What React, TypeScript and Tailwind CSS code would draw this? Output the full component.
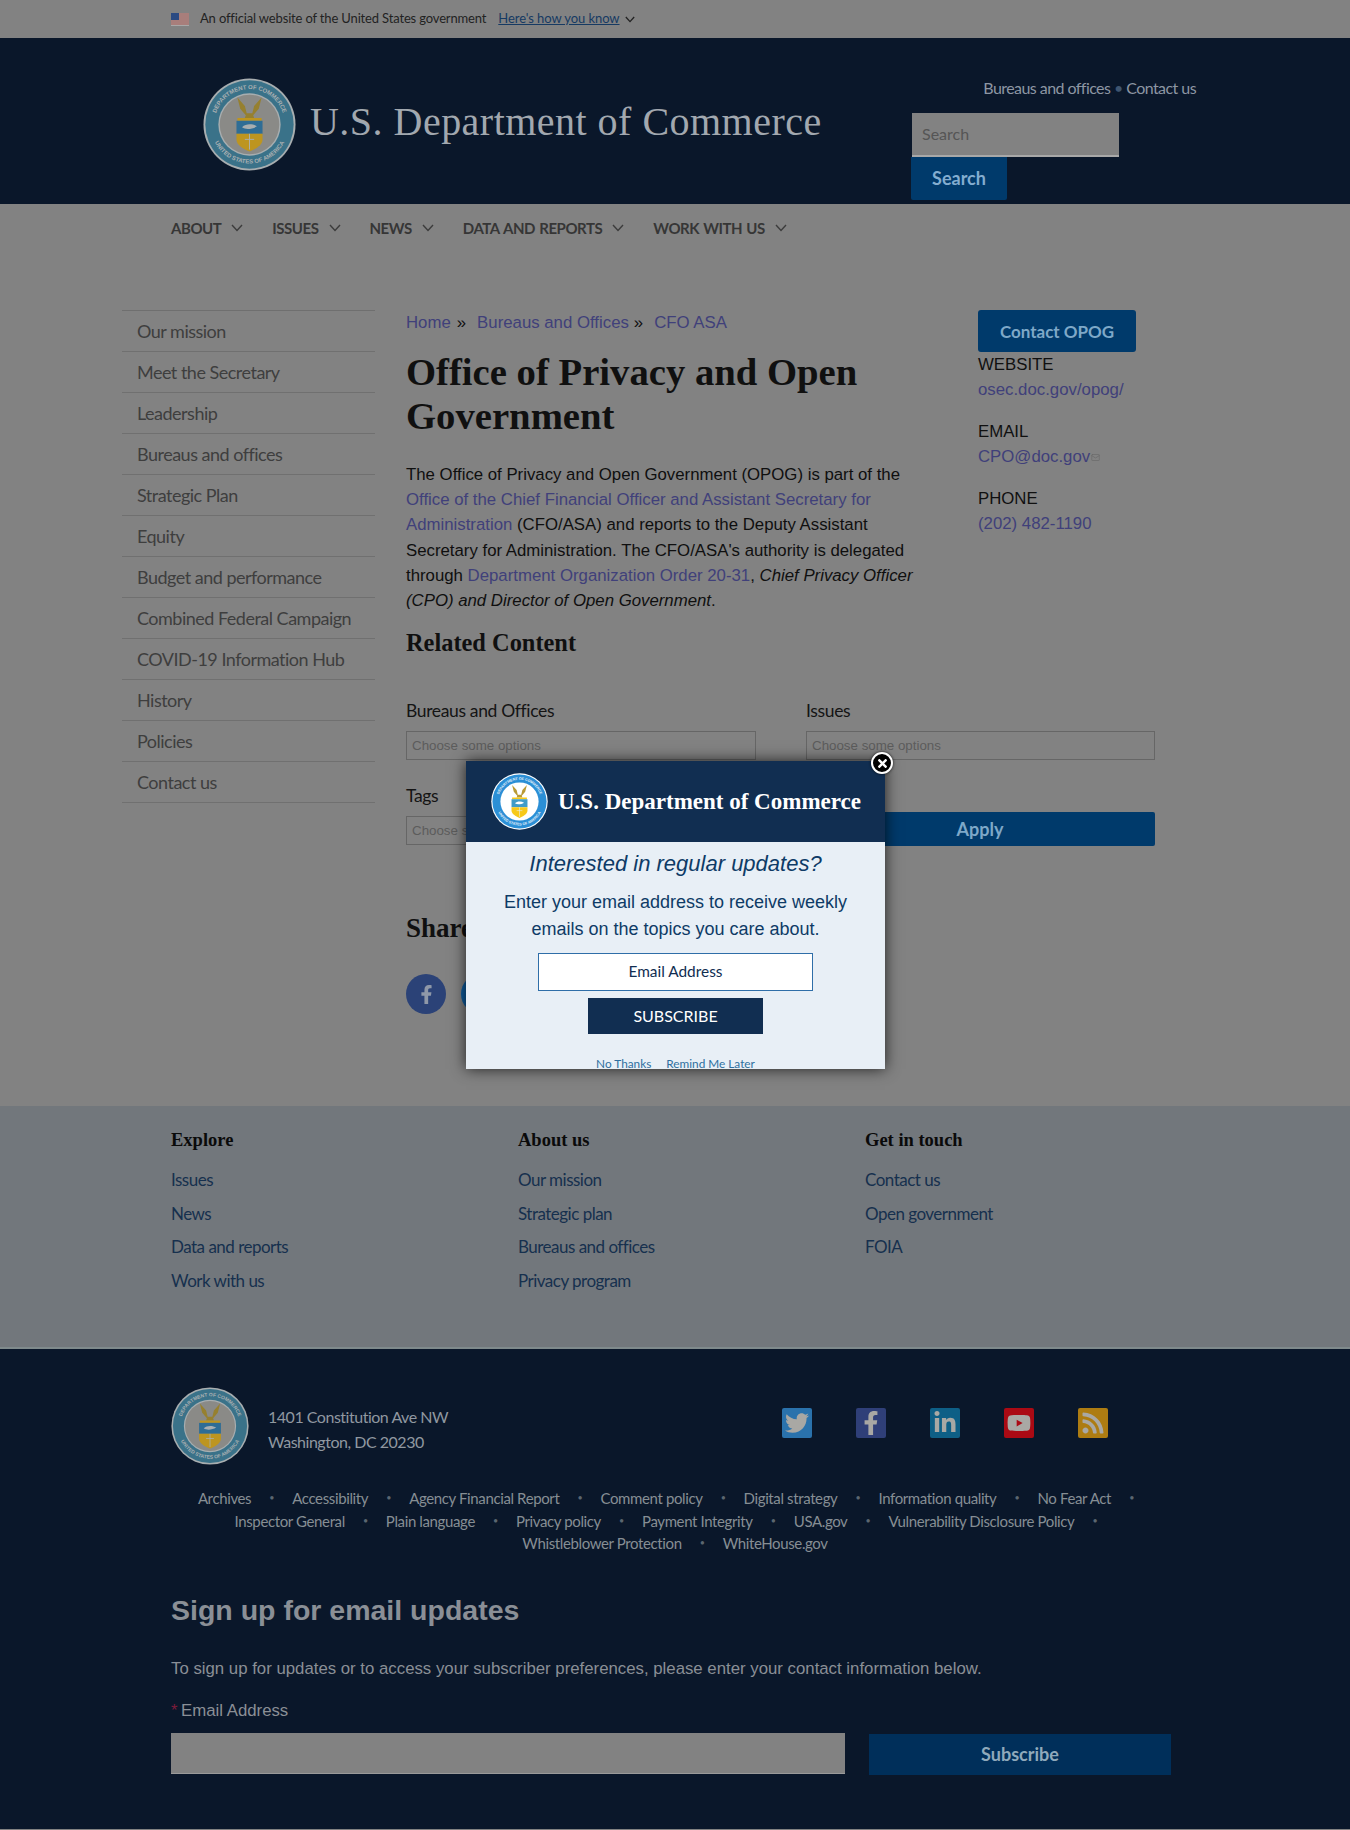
import React from "react";
import { FaFacebookF, FaTwitter, FaLinkedinIn, FaYoutube, FaRss, FaTimes } from "react-icons/fa";
import { Mail } from "lucide-react";

const Chevron = ({ c = "#3c3c3c" }: { c?: string }) => (
  <svg width="12" height="8" viewBox="0 0 12 8" fill="none" stroke={c} strokeWidth="1.4"><path d="M1 1l5 5.5L11 1" /></svg>
);

type SealColors = { edge: string; ring: string; inner: string; top: string; bottom: string; eagle: string; mark: string };

const Seal = ({ size, id, colors }: { size: number; id: string; colors: SealColors }) => (
  <svg width={size} height={size} viewBox="0 0 100 100" className="shrink-0">
    <circle cx="50" cy="50" r="49.5" fill={colors.edge} />
    <circle cx="50" cy="50" r="47.5" fill={colors.ring} />
    <circle cx="50" cy="50" r="33.5" fill={colors.edge} />
    <circle cx="50" cy="50" r="32" fill={colors.inner} />
    <defs>
      <path id={id + "a"} d="M12 50a38 38 0 0 1 76 0" />
      <path id={id + "b"} d="M8 50a42 42 0 0 0 84 0" />
    </defs>
    <text fontFamily="Liberation Sans, sans-serif" fontWeight="700" fontSize="6.4" fill={colors.mark} textAnchor="middle">
      <textPath href={"#" + id + "a"} startOffset="50%">DEPARTMENT OF COMMERCE</textPath>
    </text>
    <text fontFamily="Liberation Sans, sans-serif" fontWeight="700" fontSize="6.4" fill={colors.mark} textAnchor="middle">
      <textPath href={"#" + id + "b"} startOffset="50%">UNITED STATES OF AMERICA</textPath>
    </text>
    <path d="M37 21l8 9 2 8h6l2-8 8-9-3 12-6 7 1 3H45l1-3-6-7z" fill={colors.eagle} />
    <rect x="37" y="43" width="26" height="3" fill={colors.bottom} />
    <path d="M36 46h28v14H36z" fill={colors.top} />
    <path d="M42 53c4-4 11-4 16-1-5 3-12 4-16 1z" fill={colors.edge} />
    <path d="M36 60h28v6c0 6-7 10-14 13-7-3-14-7-14-13z" fill={colors.bottom} />
    <path d="M50 60v17M45 66h10" stroke={colors.mark} strokeWidth="1" />
  </svg>
);

const dimSeal: SealColors = { edge: "#a8aeb0", ring: "#3a7289", inner: "#8a8a87", top: "#2f6d95", bottom: "#bd9520", eagle: "#96802f", mark: "#aab0b2" };
const brightSeal: SealColors = { edge: "#ffffff", ring: "#2b8fd6", inner: "#ffffff", top: "#3f9cc8", bottom: "#f7c91a", eagle: "#b99a35", mark: "#e6f2fb" };

const sidebar = ["Our mission", "Meet the Secretary", "Leadership", "Bureaus and offices", "Strategic Plan", "Equity", "Budget and performance", "Combined Federal Campaign", "COVID-19 Information Hub", "History", "Policies", "Contact us"];
const nav = ["ABOUT", "ISSUES", "NEWS", "DATA AND REPORTS", "WORK WITH US"];
const cols = [
  { t: "Explore", l: ["Issues", "News", "Data and reports", "Work with us"] },
  { t: "About us", l: ["Our mission", "Strategic plan", "Bureaus and offices", "Privacy program"] },
  { t: "Get in touch", l: ["Contact us", "Open government", "FOIA"] },
];
const linkRows = [
  ["Archives", "Accessibility", "Agency Financial Report", "Comment policy", "Digital strategy", "Information quality", "No Fear Act", ""],
  ["Inspector General", "Plain language", "Privacy policy", "Payment Integrity", "USA.gov", "Vulnerability Disclosure Policy", ""],
  ["Whistleblower Protection", "WhiteHouse.gov"],
];

const Select = () => (
  <div className="mt-[8px] h-[29px] border border-[#666] flex items-center pl-[5px] text-[13.33px] text-[#5c5c5c] font-['Liberation_Sans',sans-serif] tracking-normal">Choose some options</div>
);

const Social = ({ bg, children }: { bg: string; children: React.ReactNode }) => (
  <div className="w-[30px] h-[30px] rounded-[2px] flex items-center justify-center text-[#a9a8a4] text-[24px]" style={{ background: bg }}>{children}</div>
);

export default function App() {
  return (
    <div className="relative w-[1350px] h-[1830px] overflow-hidden bg-[#828282] text-[#101010] font-['Lato',sans-serif]">
      <div className="h-[38px] flex items-center pl-[171px] text-[13px] text-[#222] tracking-[-0.012em]">
        <svg width="18" height="13" viewBox="0 0 18 13" className="shrink-0 mr-[11px]">
          <rect width="18" height="13" fill="#a8a8a8" />
          <path d="M0 1h18M0 3h18M0 5h18M0 7h18M0 9h18M0 11h18" stroke="#a8544e" strokeWidth="1" />
          <rect width="8" height="7" fill="#2b4a82" />
        </svg>
        <span>An official website of the United States government</span>
        <span className="ml-[12px] text-[#163a63] underline tracking-[-0.005em]">Here's how you know</span>
        <span className="ml-[5px]"><svg width="10" height="7" viewBox="0 0 12 8" fill="none" stroke="#222" strokeWidth="1.6"><path d="M1 1l5 5.5L11 1" /></svg></span>
      </div>

      <header className="h-[166px] bg-[#0a172a] flex pl-[203px]">
        <div className="w-[709px] flex items-start pt-[40px]">
          <Seal size={93} id="s1" colors={dimSeal} />
          <div className="ml-[14px] mt-[21px] text-[40px] leading-[46px] text-[#a2a8af] font-['Liberation_Serif',serif] tracking-[0.012em] whitespace-nowrap">U.S. Department of Commerce</div>
        </div>
        <div className="w-[284px] flex flex-col">
          <div className="mt-[38px] h-[24px] leading-[24px] text-right text-[16px] text-[#8d96a3] tracking-[-0.035em] whitespace-nowrap">Bureaus and offices <span className="text-[#3f5570]">•</span> Contact us</div>
          <div className="mt-[13px] w-[207px] h-[44px] bg-[#828282] border-b-2 border-[#a8a8a8] flex items-center pl-[10px] text-[#555] text-[16px]">Search</div>
          <div className="w-[96px] h-[43px] -ml-px bg-[#003a6b] rounded-b-[2px] flex items-center justify-center text-[#84add0] font-bold text-[18px]">Search</div>
        </div>
      </header>

      <nav className="h-[48px] flex items-center pl-[171px] text-[#363636] font-bold text-[15px] gap-[29px] tracking-[-0.03em] [word-spacing:1px]">
        {nav.map((n) => (
          <div key={n} className="flex items-center gap-[10px] whitespace-nowrap">
            <span>{n}</span>
            <Chevron />
          </div>
        ))}
      </nav>

      <div className="flex pt-[58px]">
        <ul className="ml-[122px] w-[253px] border-t border-[#6f6f6f] text-[18px] text-[#3e3e3e] tracking-[-0.028em]">
          {sidebar.map((s) => (
            <li key={s} className="h-[41px] border-b border-[#707070] flex items-center pl-[15px] whitespace-nowrap">{s}</li>
          ))}
        </ul>

        <main className="ml-[31px] w-[749px] pb-[92px] font-['Liberation_Sans',sans-serif]">
          <div className="flex">
            <article className="w-[520px]">
              <div className="text-[16.8px] leading-[25px] whitespace-nowrap text-[#101010]">
                <span className="text-[#40407a]">Home</span><span className="ml-[6px]">»</span>
                <span className="ml-[11px] text-[#40407a]">Bureaus and Offices</span><span className="ml-[5px]">»</span>
                <span className="ml-[11px] text-[#40407a]">CFO ASA</span>
              </div>
              <h1 className="mt-[15px] text-[38.7px] leading-[44px] font-bold text-[#101010] font-['Liberation_Serif',serif]">Office of Privacy and Open Government</h1>
              <p className="mt-[24px] text-[16.8px] leading-[25.2px] text-[#0f0f0f]">
                The Office of Privacy and Open Government (OPOG) is part of the <span className="text-[#40407a]">Office of the Chief Financial Officer and Assistant Secretary for Administration</span> (CFO/ASA) and reports to the Deputy Assistant Secretary for Administration. The CFO/ASA's authority is delegated through <span className="text-[#40407a]">Department Organization Order 20-31</span>, <em>Chief Privacy Officer (CPO) and Director of Open Government</em>.
              </p>
            </article>
            <aside className="ml-[52px] w-[177px] text-[16.8px] leading-[25px]">
              <div className="w-[158px] h-[42px] bg-[#003a6b] rounded-[3px] flex items-center justify-center text-[#7ea8c8] font-bold text-[17px] font-['Lato',sans-serif]">Contact OPOG</div>
              <div className="mt-0">WEBSITE</div>
              <div className="text-[#40407a]">osec.doc.gov/opog/</div>
              <div className="mt-[17px]">EMAIL</div>
              <div className="text-[#40407a] flex items-center">CPO@doc.gov<Mail size={9} color="#6b6b6b" className="ml-px mt-px" /></div>
              <div className="mt-[17px]">PHONE</div>
              <div className="text-[#40407a]">(202) 482-1190</div>
            </aside>
          </div>

          <h2 className="mt-[15px] text-[24.4px] leading-[30px] font-bold text-[#101010] font-['Liberation_Serif',serif]">Related Content</h2>

          <div className="mt-[41px] grid grid-cols-[350px_350px] gap-x-[49px] gap-y-[24px] font-['Lato',sans-serif] text-[#141414] text-[17.5px] leading-[24px] tracking-[-0.02em]">
            <div><div>Bureaus and Offices</div><Select /></div>
            <div className="pl-px"><div>Issues</div><Select /></div>
            <div><div>Tags</div><Select /></div>
            <div className="self-end -mb-px h-[34px] bg-[#003a6b] rounded-[2px] flex items-center justify-center text-[#7ea8c8] font-bold text-[18px] tracking-normal">Apply</div>
          </div>

          <h2 className="mt-[68px] text-[27px] leading-[30px] font-bold text-[#101010] font-['Liberation_Serif',serif]">Share</h2>
          <div className="mt-[31px] flex gap-[15px]">
            <div className="w-[40px] h-[40px] rounded-full bg-[#2b4277] flex items-center justify-center text-[#8f98a8] text-[19px]"><FaFacebookF /></div>
            <div className="w-[40px] h-[40px] rounded-full bg-[#0e5c9e] flex items-center justify-center text-[#8f98a8] text-[19px]"><FaTwitter /></div>
          </div>
        </main>
      </div>

      <section className="h-[243px] bg-[#72777c] pl-[171px] pt-[22px] flex border-b-2 border-[#7f8a8c]">
        {cols.map((c) => (
          <div key={c.t} className="w-[347px]">
            <h3 className="text-[18.5px] leading-[24px] font-bold text-[#0a0a0a] font-['Liberation_Serif',serif]">{c.t}</h3>
            <ul className="mt-[11px] text-[17px] text-[#16304e] tracking-[-0.03em]">
              {c.l.map((l) => <li key={l} className="h-[33.5px] leading-[33.5px]">{l}</li>)}
            </ul>
          </div>
        ))}
      </section>

      <footer className="h-[480px] bg-[#0a172a] px-[171px] pt-[38px]">
        <div className="flex items-start">
          <Seal size={78} id="s2" colors={dimSeal} />
          <div className="ml-[19px] pt-[17px] text-[16px] leading-[25px] text-[#9098a0] tracking-[-0.03em] whitespace-nowrap">
            <div>1401 Constitution Ave NW</div>
            <div>Washington, DC 20230</div>
          </div>
          <div className="ml-auto mr-[71px] mt-[21px] flex gap-[44px]">
            <Social bg="#2a72ac"><FaTwitter /></Social>
            <Social bg="#2f3f78"><FaFacebookF /></Social>
            <Social bg="#0e5f86"><FaLinkedinIn /></Social>
            <Social bg="#ab0a14"><FaYoutube /></Social>
            <Social bg="#ad7c12"><FaRss /></Social>
          </div>
        </div>

        <div className="mt-[22px] text-[15px] leading-[22.5px] text-[#868e94] tracking-[-0.025em]">
          {linkRows.map((r, i) => (
            <div key={i} className="flex justify-center whitespace-nowrap">
              {r.map((l, j) => (
                <React.Fragment key={j}>
                  {l && <span>{l}</span>}
                  {j < r.length - 1 && <span className="w-[41px] text-center text-[#5b6670] text-[9px]">•</span>}
                </React.Fragment>
              ))}
            </div>
          ))}
        </div>

        <h2 className="mt-[37.5px] text-[28.5px] leading-[36px] font-bold text-[#8a8f96] font-['Liberation_Sans',sans-serif]">Sign up for email updates</h2>
        <p className="mt-[27.5px] text-[16.8px] leading-[25px] text-[#8a8f96] font-['Liberation_Sans',sans-serif]">To sign up for updates or to access your subscriber preferences, please enter your contact information below.</p>
        <div className="mt-[17px] text-[16.8px] leading-[25px] text-[#8a8f96] font-['Liberation_Sans',sans-serif]"><span className="inline-block w-[10px] text-[#7c1c3a]">*</span>Email Address</div>
        <div className="mt-[10.5px] flex">
          <div className="w-[674px] h-[41px] bg-[#828282] border-b border-[#9a9a9a]" />
          <div className="ml-[24px] mt-px w-[302px] h-[41px] bg-[#002f5a] flex items-center justify-center text-[#8fa9bb] font-bold text-[18px]">Subscribe</div>
        </div>
      </footer>

      <div className="absolute left-[466px] top-[761px] w-[419px] h-[308px]">
        <div className="w-full h-full bg-[#e8eff6] overflow-hidden shadow-[0_0_14px_rgba(0,0,0,0.75)] flex flex-col items-center">
          <div className="w-full h-[81px] shrink-0 bg-[#112e51] flex items-center pl-[25px]">
            <Seal size={57} id="s3" colors={brightSeal} />
            <div className="ml-[10px] mt-[1px] text-[23px] font-bold text-white font-['Liberation_Serif',serif] whitespace-nowrap">U.S. Department of Commerce</div>
          </div>
          <div className="mt-[6px] text-[22px] leading-[32px] italic text-[#0e3b66] font-['Liberation_Sans',sans-serif] whitespace-nowrap">Interested in regular updates?</div>
          <div className="mt-[9px] text-[18px] leading-[27px] text-[#0e3b66] text-center font-['Liberation_Sans',sans-serif] whitespace-nowrap">Enter your email address to receive weekly<br />emails on the topics you care about.</div>
          <div className="mt-[10px] w-[275px] h-[38px] shrink-0 bg-white border border-[#2f6ea8] flex items-center justify-center text-[15.4px] text-[#112e51]">Email Address</div>
          <div className="mt-[7px] w-[175px] h-[36px] shrink-0 bg-[#112e51] flex items-center justify-center text-[16px] text-white">SUBSCRIBE</div>
          <div className="mt-[24px] flex gap-[15px] text-[11.8px] leading-[12px] text-[#2f6f9f] whitespace-nowrap">
            <span>No Thanks</span><span>Remind Me Later</span>
          </div>
        </div>
        <div className="absolute left-[405px] -top-[9px] w-[22px] h-[22px] rounded-full bg-black border-2 border-white flex items-center justify-center text-white text-[13px] shadow-[0_0_3px_rgba(0,0,0,0.8)]"><FaTimes /></div>
      </div>
    </div>
  );
}
